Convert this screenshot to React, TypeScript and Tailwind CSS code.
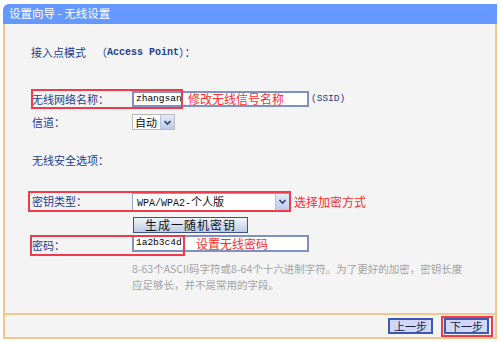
import React from 'react';

const cjk = "font-['Noto_Sans_CJK_SC',sans-serif]";
const mono = "font-['Liberation_Mono','Noto_Sans_CJK_SC',monospace]";

const Chevron: React.FC = () => (
  <svg width="9" height="7" viewBox="0 0 9 7">
    <path d="M1.5 2 L4.5 5 L7.5 2" fill="none" stroke="#2a3f7a" strokeWidth="1.6" />
  </svg>
);

const SelectArrow: React.FC = () => (
  <div className="flex h-full w-[14px] items-center justify-center border-l border-[#b7c4de] bg-gradient-to-b from-[#e3eaf7] to-[#bccbe8]">
    <Chevron />
  </div>
);

const RedBox: React.FC<{ className: string }> = ({ className }) => (
  <div className={`pointer-events-none absolute border-2 border-[#f03a4a] ${className}`} />
);

export default function App() {
  return (
    <div className={`h-[342px] w-[500px] bg-white px-[3px] pt-[4px] text-[11px] ${cjk}`}>
      {/* title bar */}
      <div className="flex h-[20px] items-center rounded-tl-[6px] bg-[#6699ff] pl-[6px] text-[11.5px] text-white">
        设置向导 - 无线设置
      </div>

      <div className="border-x-2 border-b-2 border-[#f5c58e] bg-[#f4f4f4]">
        {/* content */}
        <div className="h-[291px] border-b-2 border-[#f5c58e] pl-[26px] pt-[20px] text-[#1b3d95]">
          <div className="flex h-[16px] items-center">
            <span>接入点模式</span>
            <span className="ml-[10px]">（</span>
            <span className={`${mono} text-[10px] font-bold`}>Access Point</span>
            <span>）：</span>
          </div>

          {/* SSID */}
          <div className="relative mt-[29px] flex h-[20px] items-center">
            <span className="w-[101px] pl-[1px]">无线网络名称：</span>
            <div className="flex h-[16px] w-[177px] items-center border-2 border-[#7f90c6] bg-white">
              <span className={`w-[54px] pl-[2px] ${mono} text-[9.5px] text-black`}>zhangsan</span>
              <span className="text-[12px] text-[#ff2b2b]">修改无线信号名称</span>
            </div>
            <span className={`ml-[2px] ${mono} text-[9.5px]`}>(SSID)</span>
            <RedBox className="left-0 top-0 h-[20px] w-[152px]" />
          </div>

          {/* channel */}
          <div className="mt-[5px] flex h-[16px] items-center">
            <span className="w-[101px] pl-[1px]">信道：</span>
            <div className="flex h-[16px] w-[43px] items-center border border-[#b9b9b9] bg-white text-[#111]">
              <span className="flex-1 pl-[2px] text-[11px]">自动</span>
              <SelectArrow />
            </div>
          </div>

          <div className="mt-[22px] flex h-[16px] items-center pl-[1px]">无线安全选项：</div>

          {/* key type */}
          <div className="relative mt-[23px] flex h-[21px] items-center">
            <span className="w-[101px] pl-[1px]">密钥类型：</span>
            <div className="flex h-[18px] w-[158px] items-center border border-[#9aa5bd] bg-white text-[#111]">
              <span className="flex-1 pl-[4px]">
                <span className={`${mono} text-[10px]`}>WPA/WPA2-</span>个人版
              </span>
              <SelectArrow />
            </div>
            <span className="ml-[4px] text-[12px] text-[#ff2b2b]">选择加密方式</span>
            <RedBox className="left-[-3px] top-0 h-[21px] w-[263px]" />
          </div>

          {/* generate */}
          <div className="mt-[5px] flex h-[16px] items-center pl-[102px]">
            <button className="flex h-[16px] w-[115px] items-center justify-center border border-[#3f5186] bg-gradient-to-b from-[#f2f4fa] to-[#bfcbe3] text-[12px] tracking-[1px] text-[#111]">
              生成一随机密钥
            </button>
          </div>

          {/* password */}
          <div className="relative mt-[2px] flex h-[21px] items-start">
            <span className="flex h-[21px] w-[101px] items-center pl-[1px]">密码：</span>
            <div className="flex h-[17px] w-[177px] items-center border-2 border-[#7f90c6] bg-white">
              <span className={`w-[62px] pl-[2px] ${mono} text-[9.5px] text-black`}>1a2b3c4d</span>
              <span className="text-[12px] text-[#ff2b2b]">设置无线密码</span>
            </div>
            <RedBox className="left-[-1px] top-0 h-[21px] w-[155px]" />
          </div>

          <div className="mt-[5px] pl-[101px] pr-[20px] text-[10.5px] leading-[16px] text-[#a3a3a3]">
            8-63个ASCII码字符或8-64个十六进制字符。为了更好的加密，密钥长度
            <br />
            应足够长，并不是常用的字段。
          </div>
        </div>

        {/* footer */}
        <div className="flex h-[22px] items-center justify-end gap-[11px] pr-[6px]">
          <button className="flex h-[16px] w-[45px] items-center justify-center border-2 border-[#3f58b0] bg-[#d2d8fb] text-[11px] text-[#1a1a3a]">
            上一步
          </button>
          <div className="relative">
            <button className="flex h-[16px] w-[45px] items-center justify-center border-2 border-[#3f58b0] bg-[#d2d8fb] text-[11px] text-[#1a1a3a]">
              下一步
            </button>
            <RedBox className="left-[-3px] top-[-2px] h-[21px] w-[52px]" />
          </div>
        </div>
      </div>
    </div>
  );
}
